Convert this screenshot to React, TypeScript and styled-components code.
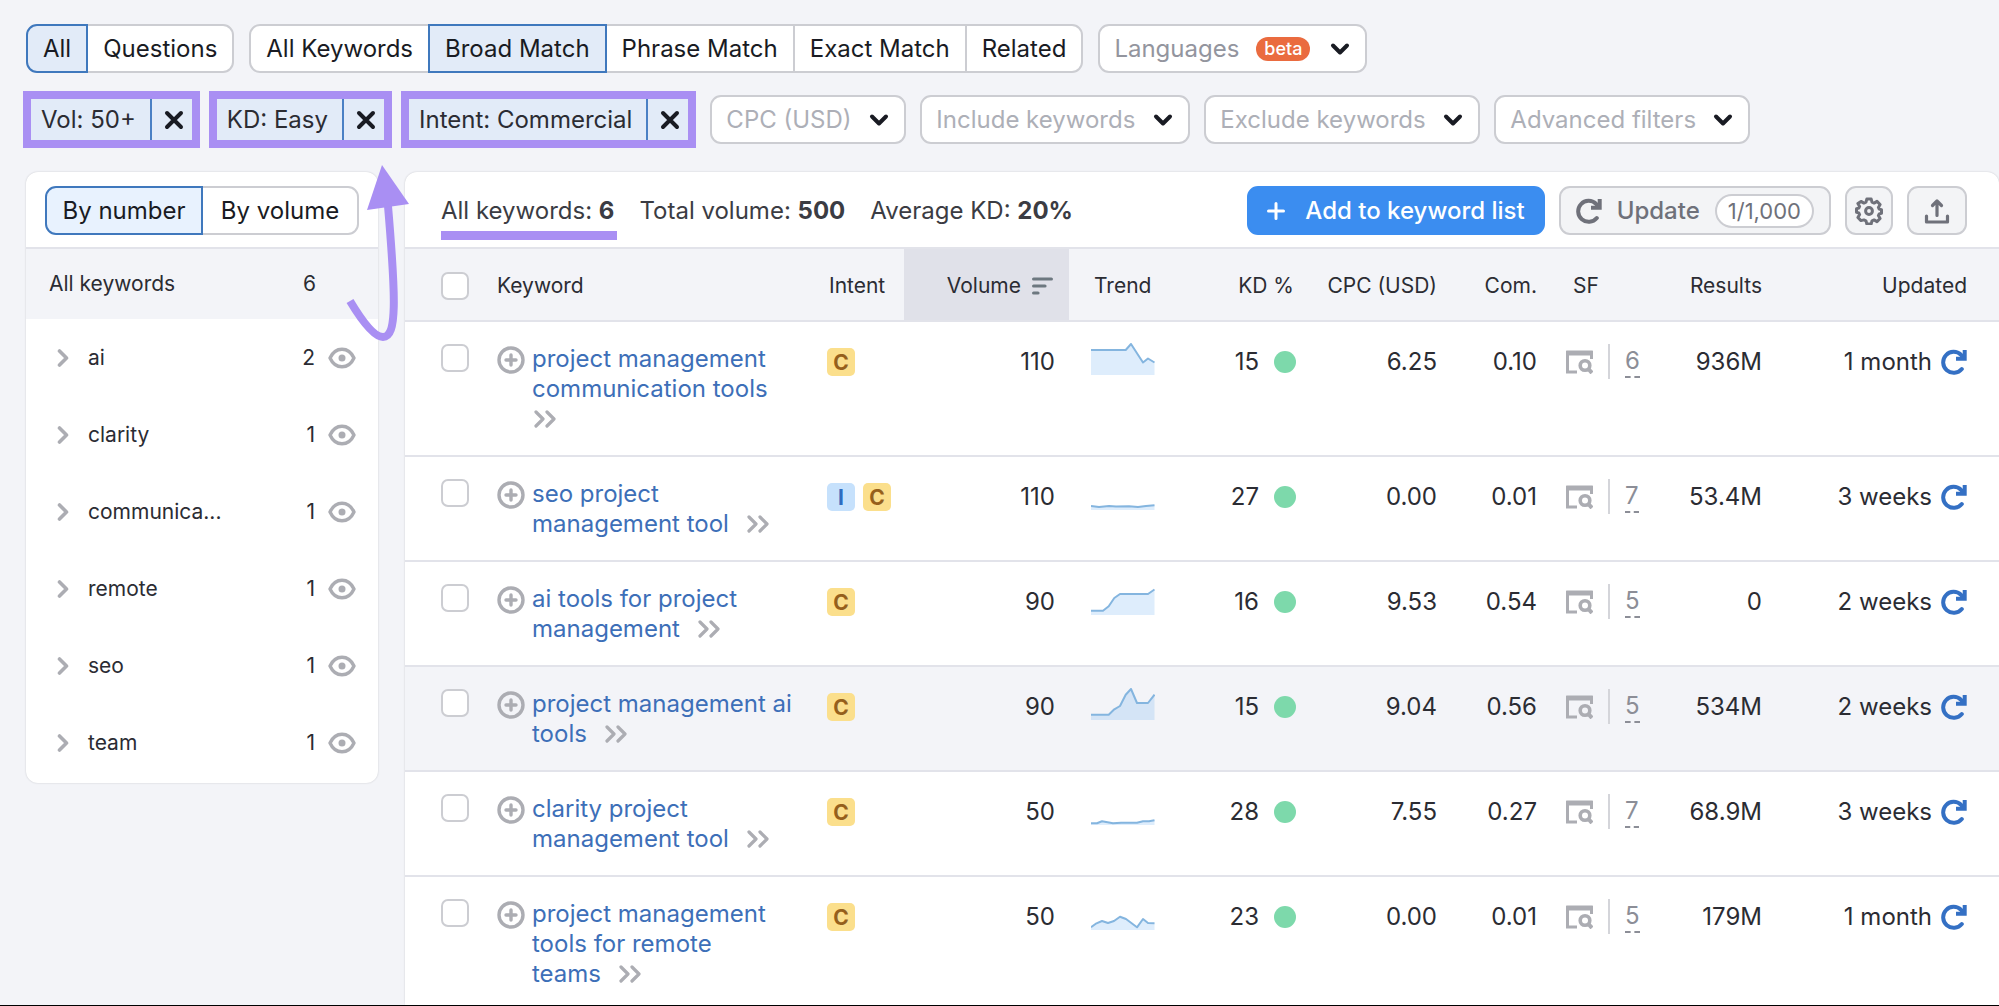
import React from 'react';
import styled, { createGlobalStyle, css } from 'styled-components';

const color = {
  page: '#f3f4f8',
  ink: '#2b2c33',
  strong: '#191b23',
  line: '#e2e3ea',
  control: '#cccdd2',
  muted: '#6f717a',
  placeholder: '#adafb7',
  icon: '#acadb3',
  link: '#3d6fb8',
  blue: '#3b8df0',
  purple: '#a98ff3',
};

const GlobalStyle = createGlobalStyle`
  *, *::before, *::after { box-sizing: border-box; }
  body { margin: 0; background: ${color.page}; }
  body, button, select, input {
    font-family: Inter, "Liberation Sans", sans-serif;
    font-size: 24px;
    line-height: 30px;
    color: ${color.ink};
  }
  button, select { margin: 0; cursor: pointer; }
`;

const Page = styled.div`
  height: 100vh;
  overflow: hidden;
  display: flex;
  flex-direction: column;
  padding-top: 24px;
  border-bottom: 1px solid #000;
`;

const Bar = styled.div`
  display: flex;
  align-items: center;
  gap: 15px;
  padding-left: 26px;
`;

const FilterBar = styled(Bar)`
  gap: 14px;
  margin: 18px 0 24px;
  padding-left: 23px;
`;

/* ---------- segmented buttons ---------- */

const Segments = styled.div`
  display: flex;
`;

const Segment = styled.button<{ $on?: boolean; $light?: boolean }>`
  height: 49px;
  padding: 0 15px;
  border: 2px solid ${color.control};
  background: #fff;
  color: ${color.strong};
  white-space: nowrap;
  & + & { margin-left: -2px; }
  &:first-child { border-radius: 11px 0 0 11px; }
  &:last-child { border-radius: 0 11px 11px 0; }
  ${(p) =>
    p.$on &&
    css`
      position: relative;
      border-color: #3f78bd;
      background: ${p.$light ? '#e8f2fe' : '#e2ebf8'};
    `}
`;

/* ---------- drop-downs ---------- */

const SelectBox = styled.label`
  position: relative;
  display: flex;
`;

const Select = styled.select<{ $badge?: boolean }>`
  appearance: none;
  height: 49px;
  padding: 0 ${(p) => (p.$badge ? 126 : 52)}px 0 14px;
  border: 2px solid ${color.control};
  border-radius: 11px;
  background: #fff;
  color: ${(p) => (p.$badge ? '#93959e' : color.placeholder)};
`;

const SelectMarks = styled.span`
  position: absolute;
  inset: 0 17px 0 auto;
  display: flex;
  align-items: center;
  gap: 20px;
  pointer-events: none;
`;

const Beta = styled.span`
  padding: 0 8px;
  border-radius: 12px;
  background: #ea6b3f;
  color: #fff;
  font-size: 18px;
  line-height: 24px;
  font-weight: 500;
`;

/* ---------- filter chips ---------- */

const Chips = styled.div`
  display: flex;
  gap: 9px;
`;

const Chip = styled.div`
  display: flex;
  height: 57px;
  border: 8px solid ${color.purple};
  background: #e2ebf8;
`;

const ChipText = styled.button`
  padding: 0 14px 0 10px;
  border: 0;
  background: none;
  color: ${color.ink};
  white-space: nowrap;
`;

const ChipClose = styled.button`
  display: flex;
  align-items: center;
  padding: 0 8px 0 12px;
  border: 0;
  border-left: 2px solid #4a80c4;
  background: none;
`;

/* ---------- panels ---------- */

const Columns = styled.div`
  flex: 1;
  min-height: 0;
  display: flex;
  align-items: flex-start;
  gap: 27px;
  padding-left: 26px;
`;

const Panel = styled.section`
  border-radius: 12px;
  background: #fff;
  box-shadow: 0 0 2px rgba(25, 27, 35, 0.2);
`;

const Sidebar = styled(Panel)`
  position: relative;
  flex: none;
  width: 352px;
  padding-bottom: 2px;
`;

const Main = styled(Panel)`
  flex: 1;
  min-width: 0;
`;

const SidebarTop = styled.div`
  height: 77px;
  padding: 14px 19px 0;
  border-bottom: 2px solid ${color.line};
  ${Segment} { flex: 1; padding: 0; }
`;

const AllRow = styled.div`
  display: flex;
  align-items: center;
  height: 70px;
  padding: 0 62px 0 23px;
  background: ${color.page};
  font-size: 21px;
`;

const Groups = styled.ul`
  list-style: none;
  margin: 0;
  padding: 0;
`;

const GroupRow = styled.li`
  display: flex;
  align-items: center;
  height: 77px;
  padding: 0 22px 0 31px;
  font-size: 21px;
`;

const IconButton = styled.button`
  display: flex;
  padding: 0;
  border: 0;
  background: none;
`;

const GroupName = styled.span`
  flex: 1;
  padding-left: 19px;
`;

const Count = styled.span`
  margin-right: 13px;
`;

const AllName = styled.span`
  flex: 1;
`;

const Arrow = styled.svg`
  position: absolute;
  top: -8px;
  right: -32px;
  pointer-events: none;
`;

/* ---------- main toolbar ---------- */

const Toolbar = styled.header`
  display: flex;
  align-items: flex-start;
  gap: 14px;
  height: 77px;
  padding: 14px 32px 0 36px;
  border-bottom: 2px solid ${color.line};
`;

const Stats = styled.div`
  flex: 1;
  display: flex;
  gap: 22px;
  padding-top: 10px;
  color: #3b3c43;
  white-space: nowrap;
  b { font-weight: 700; }
`;

const Stat = styled.span<{ $marked?: boolean }>`
  height: 44px;
  padding-right: 3px;
  border-bottom: ${(p) => (p.$marked ? `9px solid ${color.purple}` : 0)};
`;

const ToolButton = styled.button<{ $primary?: boolean; $pad: number }>`
  display: flex;
  align-items: center;
  gap: ${(p) => (p.$primary ? 20 : 15)}px;
  height: 49px;
  padding: 0 ${(p) => p.$pad}px;
  border: 2px solid ${(p) => (p.$primary ? color.blue : color.control)};
  border-radius: 11px;
  background: ${(p) => (p.$primary ? color.blue : '#f3f4f6')};
  color: ${(p) => (p.$primary ? '#fff' : color.muted)};
  font-weight: 500;
  white-space: nowrap;
`;

const Quota = styled.span`
  padding: 0 11px;
  border: 2px solid ${color.control};
  border-radius: 18px;
  background: #fff;
  font-size: 22px;
  font-weight: 400;
`;

/* ---------- table ---------- */

const Table = styled.table`
  width: 100%;
  table-layout: fixed;
  border-collapse: separate;
  border-spacing: 0;
`;

const Col = styled.col<{ $w?: number }>`
  width: ${(p) => (p.$w ? `${p.$w}px` : 'auto')};
`;

const Th = styled.th<{ $right?: boolean; $l?: number; $r?: number; $sorted?: boolean }>`
  height: 73px;
  padding: 2px ${(p) => p.$r ?? 0}px 0 ${(p) => p.$l ?? 0}px;
  border-bottom: 2px solid ${color.line};
  background: ${(p) => (p.$sorted ? '#e0e1e9' : color.page)};
  font-size: 21px;
  font-weight: 400;
  text-align: ${(p) => (p.$right ? 'right' : 'left')};
  white-space: nowrap;
`;

const Tr = styled.tr<{ $hover?: boolean }>`
  background: ${(p) => (p.$hover ? color.page : '#fff')};
`;

const Td = styled.td<{ $right?: boolean; $l?: number; $r?: number; $top?: number }>`
  padding: ${(p) => p.$top ?? 25}px ${(p) => p.$r ?? 0}px 0 ${(p) => p.$l ?? 0}px;
  border-bottom: 2px solid ${color.line};
  vertical-align: top;
  text-align: ${(p) => (p.$right ? 'right' : 'left')};
  white-space: nowrap;
`;

const Check = styled.input`
  appearance: none;
  display: block;
  width: 28px;
  height: 28px;
  margin: 0;
  border: 2px solid ${color.control};
  border-radius: 7px;
  background: #fff;
  &:checked { background: ${color.blue}; }
`;

const Keyword = styled.div`
  display: flex;
  align-items: flex-start;
  gap: 7px;
  padding: 0 30px 21px 0;
  white-space: normal;
`;

const AddButton = styled(IconButton)`
  padding-top: 2px;
`;

const Link = styled.a`
  color: ${color.link};
  text-decoration: none;
`;

const Tail = styled.span`
  white-space: nowrap;
`;

const Inline = styled.span<{ $gap: number }>`
  display: inline-flex;
  align-items: center;
  gap: ${(p) => p.$gap}px;
`;

const Intent = styled.span<{ $kind: string }>`
  display: grid;
  place-items: center;
  width: 28px;
  height: 28px;
  border-radius: 5px;
  background: ${(p) => (p.$kind === 'C' ? '#fbdf8c' : '#c6e1fc')};
  color: ${(p) => (p.$kind === 'C' ? '#95601c' : '#2f6cc0')};
  font-size: 21px;
  font-weight: 700;
`;

const Dot = styled.span`
  width: 22px;
  height: 22px;
  border-radius: 50%;
  background: #7dd9ab;
`;

const Rule = styled.span`
  width: 2px;
  height: 35px;
  background: #d4d5da;
`;

const Features = styled.a`
  border-bottom: 2px dashed #8c8e97;
  color: #8c8e97;
  text-decoration: none;
`;

const Block = styled.svg`
  display: block;
`;

const More = styled.svg<{ $spaced: boolean }>`
  margin-left: ${(p) => (p.$spaced ? 18 : 2)}px;
  vertical-align: -1px;
`;

/* ---------- icons ---------- */

const stroke = {
  fill: 'none',
  stroke: 'currentColor',
  strokeLinecap: 'round' as const,
  strokeLinejoin: 'round' as const,
};

const ChevronDown = () => (
  <Block width="20" height="14" viewBox="0 0 20 14" {...stroke} stroke={color.strong} strokeWidth="4">
    <path d="M3 3.5l7 7 7-7" />
  </Block>
);

const ChevronRight = () => (
  <Block width="12" height="20" viewBox="0 0 12 20" {...stroke} stroke={color.icon} strokeWidth="3.600">
    <path d="M2.500 3l7 7-7 7" />
  </Block>
);

const Cross = () => (
  <Block width="20" height="20" viewBox="0 0 20 20" {...stroke} stroke={color.strong} strokeWidth="4">
    <path d="M3 3l14 14M17 3L3 17" />
  </Block>
);

const Eye = () => (
  <Block width="28" height="22" viewBox="0 0 28 22" {...stroke} stroke={color.icon} strokeWidth="3.400">
    <path d="M2 11C5 4.500 9.500 2.200 14 2.200S23 4.500 26 11C23 17.500 18.500 19.800 14 19.800S5 17.500 2 11z" />
    <circle cx="14" cy="11" r="3.500" fill={color.icon} stroke="none" />
  </Block>
);

const PlusCircle = () => (
  <Block width="28" height="28" viewBox="0 0 28 28" {...stroke} stroke={color.icon} strokeWidth="3.400">
    <circle cx="14" cy="14" r="12" />
    <path d="M14 9v10M9 14h10" />
  </Block>
);

const Refresh = ({ tint }: { tint: string }) => (
  <Block width="26" height="26" viewBox="0 0 26 26" fill="none" stroke={tint} strokeWidth="4">
    <path d="M20.800 20A10.500 10.500 0 1 1 20 5.800L22 8" strokeLinecap="round" />
    <path d="M23.700 1v8.700H15" />
  </Block>
);

const Gear = () => (
  <Block width="28" height="28" viewBox="0 0 28 28" {...stroke} strokeWidth="3">
    <path d="M11.800 2h4.400l.8 3.200 2.100.9 2.900-1.700 3.100 3.100-1.700 2.900.8 1.700 2.300.6v3.600l-2.300.6-.8 1.700 1.700 2.900-3.100 3.100-2.900-1.700-2.100.9-.8 3.200h-4.400l-.8-3.200-2.100-.9L6 23.600l-3.100-3.100 1.700-2.900-.8-1.700-2.300-.6v-3.600l2.300-.6.8-1.700-1.700-2.900L6 4.400l2.900 1.700 2.100-.9z" />
    <circle cx="14" cy="14" r="3.400" />
  </Block>
);

const Upload = () => (
  <Block width="26" height="26" viewBox="0 0 26 26" {...stroke} strokeWidth="3.200">
    <path d="M13 17.500V4M8.500 7.500L13 3l4.500 4.500M2.500 18v6h21v-6" />
  </Block>
);

const Plus = () => (
  <Block width="18" height="18" viewBox="0 0 18 18" {...stroke} strokeWidth="3">
    <path d="M9 1.500v15M1.500 9h15" />
  </Block>
);

const SortDesc = () => (
  <Block width="21" height="18" viewBox="0 0 21 18" {...stroke} stroke="#6d7880" strokeWidth="3.200">
    <path d="M1.600 2h17.800M1.600 9h11.400M1.600 16h4.400" />
  </Block>
);

const Serp = () => (
  <Block width="27" height="24" viewBox="0 0 27 24" fill="none" stroke={color.icon} strokeWidth="3">
    <path d="M1 3h25" strokeWidth="5" strokeLinecap="round" />
    <path d="M1.500 3v19H11M25.500 4v5" />
    <circle cx="19" cy="15.500" r="4.800" strokeWidth="3.600" />
    <path d="M22 18.500l4 4.500" strokeWidth="4" />
  </Block>
);

const DoubleChevron = ({ spaced }: { spaced: boolean }) => (
  <More $spaced={spaced} width="22" height="18" viewBox="0 0 22 18" {...stroke} stroke={color.icon} strokeWidth="3.200">
    <path d="M2 2l7 7-7 7M13 2l7 7-7 7" />
  </More>
);

const Trend = ({ points }: { points: string }) => (
  <Block width="64" height="32" viewBox="0 0 64 32">
    <polygon points={`0,32 ${points} 63.500,32`} fill="#4a9cec" fillOpacity="0.18" />
    <polyline points={points} fill="none" stroke="#84b5df" strokeWidth="2" strokeLinejoin="round" />
  </Block>
);

/* ---------- data ---------- */

const matchTypes = ['All Keywords', 'Broad Match', 'Phrase Match', 'Exact Match', 'Related'];
const activeFilters = ['Vol: 50+', 'KD: Easy', 'Intent: Commercial'];
const openFilters = ['CPC (USD)', 'Include keywords', 'Exclude keywords', 'Advanced filters'];

const groups: [string, number][] = [
  ['ai', 2],
  ['clarity', 1],
  ['communica...', 1],
  ['remote', 1],
  ['seo', 1],
  ['team', 1],
];

interface Row {
  head: string;
  tail: string;
  intent: string[];
  volume: number;
  trend: string;
  kd: number;
  cpc: string;
  com: string;
  sf: number;
  results: string;
  updated: string;
  hover?: boolean;
}

const rows: Row[] = [
  { head: 'project management communication tools', tail: '', intent: ['C'], volume: 110, trend: '0,7 34.7,7 40,1 52,19.5 57,15.5 63.5,19.5', kd: 15, cpc: '6.25', com: '0.10', sf: 6, results: '936M', updated: '1 month' },
  { head: 'seo project management', tail: 'tool', intent: ['I', 'C'], volume: 110, trend: '0,28 8,29 18,28 25,28.6 38,28.2 47,29 55,28 63.5,27.3', kd: 27, cpc: '0.00', com: '0.01', sf: 7, results: '53.4M', updated: '3 weeks' },
  { head: 'ai tools for project', tail: 'management', intent: ['C'], volume: 90, trend: '0,27.7 12,27.7 17.7,23.3 23.3,15 29,11 57,11 63.5,6.5', kd: 16, cpc: '9.53', com: '0.54', sf: 5, results: '0', updated: '2 weeks' },
  { head: 'project management ai', tail: 'tools', intent: ['C'], volume: 90, trend: '0,26.7 17.7,26.7 23.3,21.3 29,18 34.7,6.7 40,1 46,15 57,15 63.5,6.7', kd: 15, cpc: '9.04', com: '0.56', sf: 5, results: '534M', updated: '2 weeks', hover: true },
  { head: 'clarity project management', tail: 'tool', intent: ['C'], volume: 50, trend: '0,30.3 6,30.3 11,28.3 22,30.3 30,29.7 46,29.7 52,28.3 58,28.3 63.5,27.3', kd: 28, cpc: '7.55', com: '0.27', sf: 7, results: '68.9M', updated: '3 weeks' },
  { head: 'project management tools for remote', tail: 'teams', intent: ['C'], volume: 50, trend: '0,29.3 5.5,25.3 11,23 17,25 23,23 29,18.7 35,21 46,29.3 52,21 57,25 63.5,25.3', kd: 23, cpc: '0.00', com: '0.01', sf: 5, results: '179M', updated: '1 month' },
];

const Dropdown = ({ name, beta }: { name: string; beta?: boolean }) => (
  <SelectBox>
    <Select $badge={beta} aria-label={name} defaultValue={name}>
      <option>{name}</option>
    </Select>
    <SelectMarks>
      {beta && <Beta>beta</Beta>}
      <ChevronDown />
    </SelectMarks>
  </SelectBox>
);

const KeywordRow = ({ row }: { row: Row }) => (
  <Tr $hover={row.hover}>
    <Td $l={36} $top={22}>
      <Check type="checkbox" aria-label={`Select ${row.head} ${row.tail}`} />
    </Td>
    <Td $top={22}>
      <Keyword>
        <AddButton aria-label="Add keyword"><PlusCircle /></AddButton>
        <span>
          <Link href="#">{row.head}</Link>{' '}
          <Tail>
            {row.tail && <Link href="#">{row.tail}</Link>}
            <DoubleChevron spaced={row.tail !== ''} />
          </Tail>
        </span>
      </Keyword>
    </Td>
    <Td>
      <Inline $gap={8}>
        {row.intent.map((kind) => <Intent key={kind} $kind={kind}>{kind}</Intent>)}
      </Inline>
    </Td>
    <Td $right $r={14}>{row.volume}</Td>
    <Td $l={22} $top={21}><Trend points={row.trend} /></Td>
    <Td $right>
      <Inline $gap={15}>{row.kd}<Dot /></Inline>
    </Td>
    <Td $right>{row.cpc}</Td>
    <Td $right>{row.com}</Td>
    <Td $l={29} $top={22}>
      <Inline $gap={15}>
        <Serp />
        <Rule />
        <Features href="#">{row.sf}</Features>
      </Inline>
    </Td>
    <Td $right>{row.results}</Td>
    <Td $right $r={32}>
      <Inline $gap={9}>
        {row.updated}
        <IconButton aria-label="Refresh keyword"><Refresh tint="#3470c4" /></IconButton>
      </Inline>
    </Td>
  </Tr>
);

export default function App() {
  return (
    <Page>
      <GlobalStyle />
      <Bar>
        <Segments>
          <Segment $on aria-pressed="true">All</Segment>
          <Segment>Questions</Segment>
        </Segments>
        <Segments>
          {matchTypes.map((name) => (
            <Segment key={name} $on={name === 'Broad Match'}>{name}</Segment>
          ))}
        </Segments>
        <Dropdown name="Languages" beta />
      </Bar>
      <FilterBar>
        <Chips>
          {activeFilters.map((name) => (
            <Chip key={name}>
              <ChipText>{name}</ChipText>
              <ChipClose aria-label={`Clear ${name}`}><Cross /></ChipClose>
            </Chip>
          ))}
        </Chips>
        {openFilters.map((name) => <Dropdown key={name} name={name} />)}
      </FilterBar>

      <Columns>
        <Sidebar>
          <SidebarTop>
            <Segments>
              <Segment $on $light aria-pressed="true">By number</Segment>
              <Segment>By volume</Segment>
            </Segments>
          </SidebarTop>
          <AllRow><AllName>All keywords</AllName>6</AllRow>
          <Groups>
            {groups.map(([name, count]) => (
              <GroupRow key={name}>
                <IconButton aria-label={`Expand ${name}`}><ChevronRight /></IconButton>
                <GroupName>{name}</GroupName>
                <Count>{count}</Count>
                <IconButton aria-label={`Hide ${name}`}><Eye /></IconButton>
              </GroupRow>
            ))}
          </Groups>
          <Arrow width="66" height="180" viewBox="344 164 66 180" aria-hidden="true">
            <path d="M350 301C362 321 374 337 383 337C397 337 396 300 388 206" fill="none" stroke={color.purple} strokeWidth="8" />
            <path d="M382 165L367 210L409 204z" fill={color.purple} />
          </Arrow>
        </Sidebar>

        <Main>
          <Toolbar>
            <Stats>
              <Stat $marked>All keywords: <b>6</b></Stat>
              <Stat>Total volume: <b>500</b></Stat>
              <Stat>Average KD: <b>20%</b></Stat>
            </Stats>
            <ToolButton $primary $pad={18}><Plus />Add to keyword list</ToolButton>
            <ToolButton $pad={15}><Refresh tint={color.muted} />Update<Quota>1/1,000</Quota></ToolButton>
            <ToolButton $pad={8} aria-label="Settings"><Gear /></ToolButton>
            <ToolButton $pad={15} aria-label="Export"><Upload /></ToolButton>
          </Toolbar>
          <Table>
            <colgroup>
              <Col $w={92} /><Col /><Col $w={77} /><Col $w={165} /><Col $w={111} /><Col $w={116} />
              <Col $w={141} /><Col $w={100} /><Col $w={113} /><Col $w={112} /><Col $w={237} />
            </colgroup>
            <thead>
              <tr>
                <Th $l={36}><Check type="checkbox" aria-label="Select all keywords" /></Th>
                <Th>Keyword</Th>
                <Th $l={2}>Intent</Th>
                <Th $right $r={16} $sorted><Inline $gap={11}>Volume<SortDesc /></Inline></Th>
                <Th $l={25}>Trend</Th>
                <Th $right $r={2}>KD %</Th>
                <Th $right>CPC (USD)</Th>
                <Th $right>Com.</Th>
                <Th $l={36}>SF</Th>
                <Th $right>Results</Th>
                <Th $right $r={32}>Updated</Th>
              </tr>
            </thead>
            <tbody>
              {rows.map((row) => <KeywordRow key={row.head} row={row} />)}
            </tbody>
          </Table>
        </Main>
      </Columns>
    </Page>
  );
}
